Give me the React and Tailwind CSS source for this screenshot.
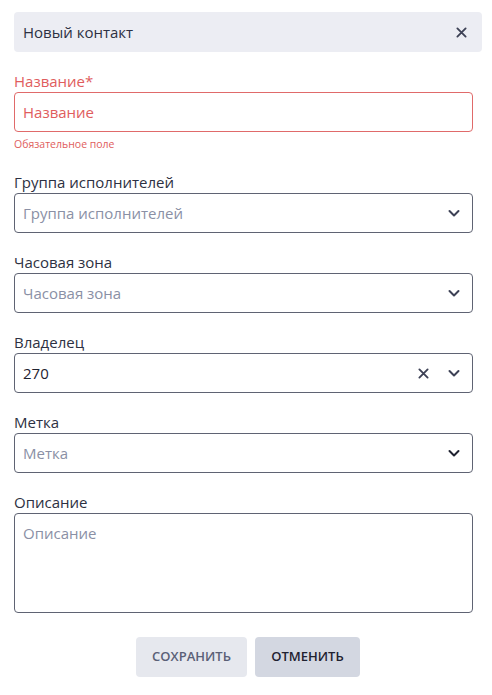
import React from "react";

const font = { fontFamily: "'Open Sans', 'Noto Sans', sans-serif" };

function Chevron({ dark }) {
  return (
    <svg width="14" height="14" viewBox="0 0 14 14" fill="none" className={dark ? "text-[#1f2230]" : "text-[#3d4155]"}>
      <path d="M2.5 5l4.5 4.5L11.5 5" stroke="currentColor" strokeWidth="2" strokeLinecap="round" strokeLinejoin="round" />
    </svg>
  );
}

function Cross({ size = 12, cls = "text-[#3d4155]" }) {
  return (
    <svg width={size} height={size} viewBox="0 0 12 12" fill="none" className={cls}>
      <path d="M1.5 1.5l9 9M10.5 1.5l-9 9" stroke="currentColor" strokeWidth="2" strokeLinecap="round" />
    </svg>
  );
}

function Label({ children, red }) {
  return (
    <div className={`text-[15px] leading-[20px] mb-[1px] ${red ? "text-[#e05d5d]" : "text-[#2d3142]"}`}>{children}</div>
  );
}

function Select({ label, placeholder, value, clear, dark }) {
  return (
    <div>
      <Label>{label}</Label>
      <div className="h-[40px] rounded-[4px] border border-[#5f6373] flex items-center pl-[8px] pr-[11px]">
        <span className={`flex-1 text-[15px] ${value ? "text-[#1f2230]" : "text-[#8a90a5]"}`}>{value || placeholder}</span>
        {clear && (
          <span className="mr-[18px] flex items-center">
            <Cross size={11} cls="text-[#3d4155]" />
          </span>
        )}
        <Chevron dark={dark} />
      </div>
    </div>
  );
}

export default function App() {
  return (
    <div className="w-[492px] h-[695px] bg-white pt-[12px] pl-[14px] pr-[10px]" style={font}>
      <div className="h-[40px] rounded-[4px] bg-[#ecedf3] flex items-center justify-between pl-[9px] pr-[15px]">
        <span className="text-[15px] text-[#2d3142]">Новый контакт</span>
        <Cross size={11} cls="text-[#3d4155]" />
      </div>
      <div className="pr-[9px] flex flex-col">
        <div className="mt-[19px]">
          <Label red>Название*</Label>
          <div className="h-[40px] rounded-[4px] border border-[#e06a6a] flex items-center px-[8px]">
            <span className="text-[15px] text-[#e05d5d]">Название</span>
          </div>
          <div className="text-[10.5px] leading-[16px] mt-[4px] text-[#e05d5d]">Обязательное поле</div>
        </div>
        <div className="mt-[20px] flex flex-col gap-[19px]">
          <Select label="Группа исполнителей" placeholder="Группа исполнителей" />
          <Select label="Часовая зона" placeholder="Часовая зона" />
          <Select label="Владелец" value="270" clear />
          <Select label="Метка" placeholder="Метка" dark />
          <div>
            <Label>Описание</Label>
            <div className="h-[100px] rounded-[4px] border border-[#5f6373] px-[8px] pt-[7px]">
              <span className="text-[15px] text-[#8a90a5]">Описание</span>
            </div>
          </div>
        </div>
      </div>
      <div className="mt-[24px] flex justify-center gap-[8px]">
        <button className="h-[40px] w-[111px] rounded-[4px] bg-[#e6e8ee] text-[13px] font-semibold text-[#5a6077]">СОХРАНИТЬ</button>
        <button className="h-[40px] w-[105px] rounded-[4px] bg-[#d3d7e1] text-[13px] font-semibold text-[#1f2230]">ОТМЕНИТЬ</button>
      </div>
    </div>
  );
}
